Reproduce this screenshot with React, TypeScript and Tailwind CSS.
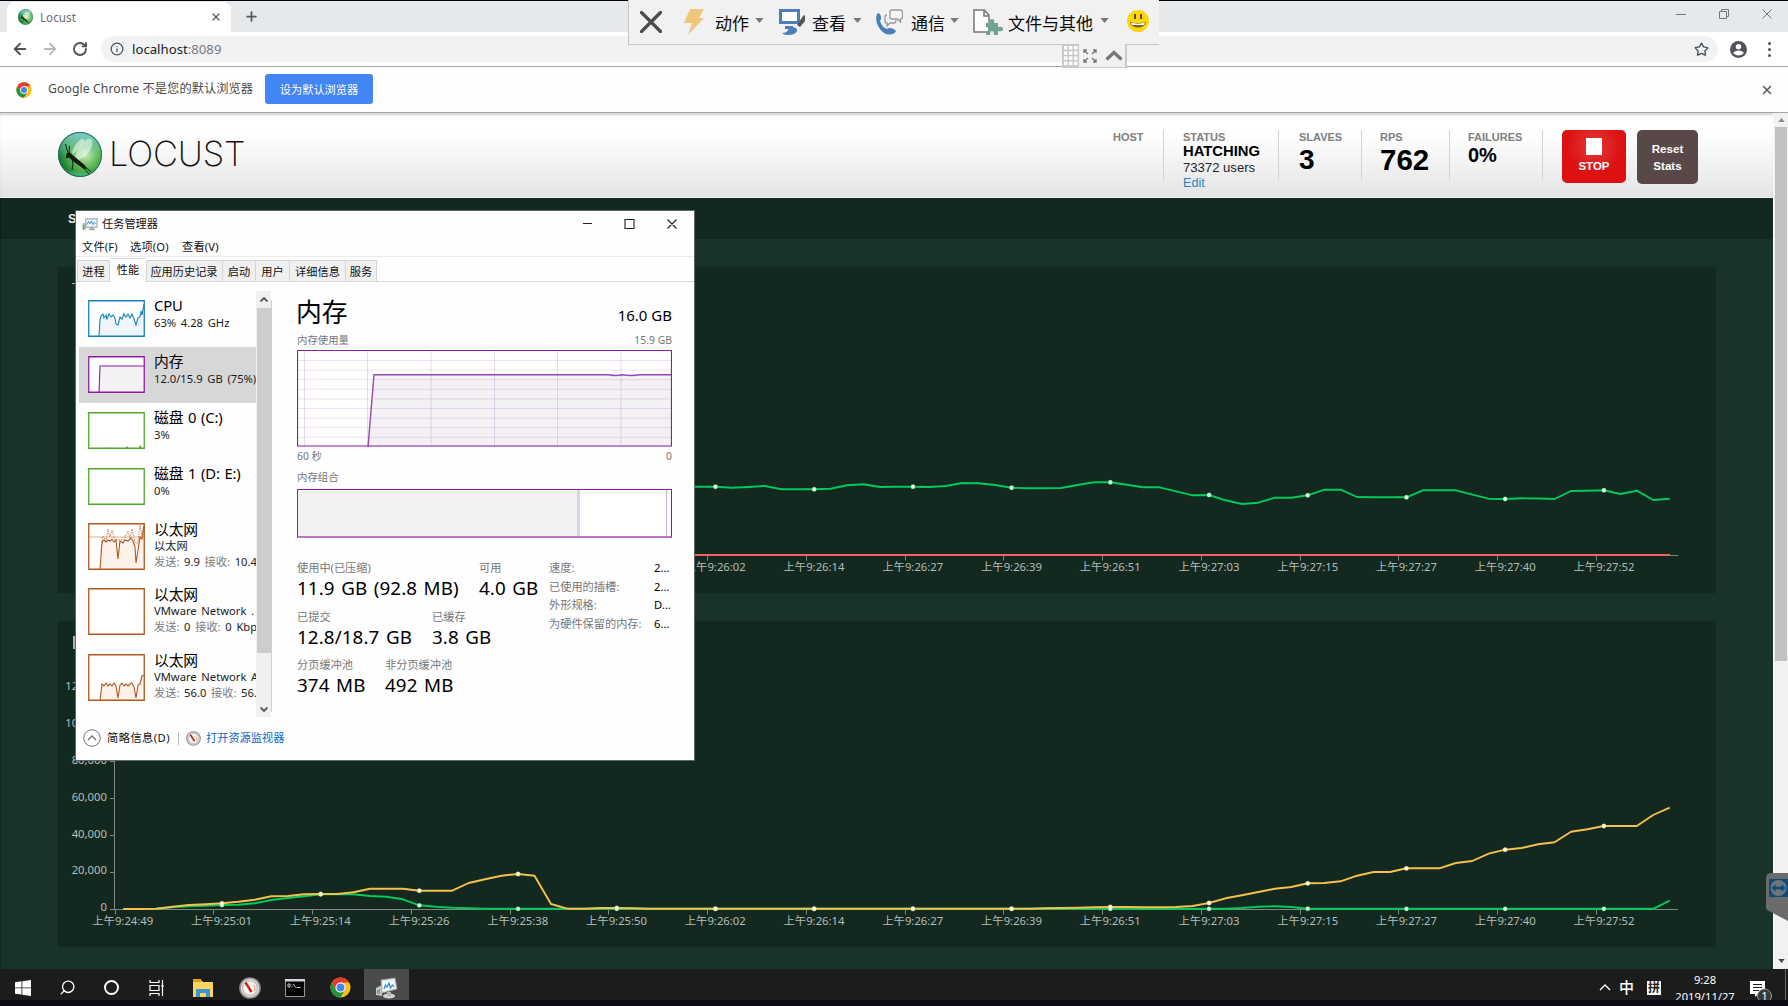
import React from "react";
import { Star, RotateCw, ArrowLeft, ArrowRight, Info, X, Plus, Search } from "lucide-react";

const UI = "font-['Noto_Sans','Noto_Sans_CJK_SC',sans-serif]";

/* ---------- chart data (pixel heights inside each panel) ---------- */
const X0 = 123.2;
const STEP = 16.452;
const px = (i: number) => X0 + i * STEP;

const rps = [
  486.7, 486.7, 486.7, 487.7, 487, 486, 489.3, 489.3, 489.3, 488.7, 485.3, 484.3, 487, 486.8, 486.7, 487, 486, 483, 483.3,
  485, 487.7, 488.3, 488.2, 488, 485, 482.3, 482.3, 484.7, 487.3, 487.3, 491.3, 495.3, 495, 500.3, 504, 502.7, 497.7,
  497.7, 495.3, 489.7, 489.7, 497, 497.2, 497.3, 497.3, 490.3, 490.3, 490.3, 494.7, 498.7, 499, 498.3, 498.5, 499, 491,
  490.7, 490.3, 494, 490.7, 500, 498.7,
];
const flat = (n: number, v: number) => Array.from({ length: n }, () => v);
const p95 = [
  507, 507, 506, 500, 495, 493, 490, 485, 479, 469, 468, 463, 462, 462, 457, 446, 446, 446, 452, 452, 452, 429, 418, 407,
  402, 407, 492, 506, 506, 504, 504, 505,
  ...flat(24, 506),
  505, 504, 503, 502, 501, 501, 502, 502, 501, 498, 489, 475, 466, 456, 446, 441, 430, 429, 424, 407, 396, 396, 385, 385,
  385, 369, 363, 341, 329, 324, 313, 307, 275, 268, 258, 258, 258, 225, 203,
].map((v) => 740 + v / 3);
const p50 = [
  507, 507, 506, 502, 499, 497, 495, 494, 490, 480, 474, 469, 463, 463, 463, 468, 470, 478, 496, 500, 503, 505,
  ...flat(46, 506.5),
  504, 500, 499, 501, 506,
  ...flat(21, 506.5),
  482,
].map((v) => 740 + v / 3);

const times = [
  "9:24:49", "9:25:01", "9:25:14", "9:25:26", "9:25:38", "9:25:50", "9:26:02", "9:26:14", "9:26:27", "9:26:39",
  "9:26:51", "9:27:03", "9:27:15", "9:27:27", "9:27:40", "9:27:52",
];

function Series({ ys, start = 0, color }: { ys: number[]; start?: number; color: string }) {
  const pts = ys.map((y, k) => `${px(k + start).toFixed(1)},${y.toFixed(1)}`).join(" ");
  return (
    <g>
      <polyline points={pts} fill="none" stroke={color} strokeWidth="1.9" strokeLinejoin="round" />
      {ys.map((y, k) => ((k + start) % 6 === 0 && k + start > 0 ? <circle key={k} cx={px(k + start)} cy={y} r="2.200" fill="#f4fff0" stroke={color} strokeWidth=".4" /> : null))}
    </g>
  );
}

function TimeAxis({ y, from = 0 }: { y: number; from?: number }) {
  return (
    <g>
      <path d={`M115 ${y}H1678`} stroke="#7c8a83" strokeWidth="1" />
      {times.map((t, i) =>
        i < from ? null : (
          <g key={t}>
            <path d={`M${Math.round(114.5 + i * 98.75) + 0.5} ${y}v5`} stroke="#7c8a83" />
            <text x={X0 + i * 98.75 - 0.4} y={y + 15.7} textAnchor="middle" fontSize="11.300" fill="#b3beb8">
              上午{t}
            </text>
          </g>
        )
      )}
    </g>
  );
}

/* ---------- small drawings ---------- */
function LocustBall({ className }: { className: string }) {
  return (
    <svg viewBox="0 0 44 45" className={className}>
      <defs>
        <radialGradient id="ball" cx=".62" cy=".5" r=".6">
          <stop offset="0" stopColor="#d4efc4" />
          <stop offset=".35" stopColor="#7cc66c" />
          <stop offset=".75" stopColor="#2d9a33" />
          <stop offset="1" stopColor="#12683a" />
        </radialGradient>
        <linearGradient id="sky" x1="0" y1="0" x2="0" y2="1">
          <stop offset="0" stopColor="#7fcfd0" />
          <stop offset=".55" stopColor="#7fcfb0" stopOpacity=".1" />
          <stop offset=".85" stopColor="#5fd0a0" stopOpacity="0" />
          <stop offset="1" stopColor="#4fc49a" stopOpacity=".8" />
        </linearGradient>
      </defs>
      <ellipse cx="22" cy="22.5" rx="22" ry="22.5" fill="url(#ball)" />
      <ellipse cx="22" cy="22.5" rx="21.500" ry="22" fill="url(#sky)" stroke="#1c6f58" />
      <path d="M14 21C16 12 23 5 26 7c1 4-5 10-11 15z" fill="#f2fbef" opacity=".55" />
      <path d="M17 24C21 12 31 3 34 8c2 8-6 18-14 20z" fill="#f2fbef" opacity=".55" />
      <path d="M8 23q1-3 4-2.500l3 3 11 9 3 4-3 .5-10-7-5-4.500-3 1z" fill="#161c14" />
      <path d="M10 21 7.500 12M11 21l.5-7M14 27l1 5-1 6M22 32l9 10M25 33l8 7" stroke="#161c14" strokeWidth="1" fill="none" />
    </svg>
  );
}

function ChromeLogo({ className }: { className: string }) {
  return (
    <svg viewBox="0 0 48 48" className={className}>
      <circle cx="24" cy="24" r="23" fill="#fbc116" />
      <path d="M24 24 4.100 12.500A23 23 0 0 1 43.900 12.500L24 12.500z" fill="#e33b2e" />
      <path d="M4.100 12.500 14 29.800 24 24V12.500z" fill="#e33b2e" />
      <path d="M4.100 12.500A23 23 0 0 0 24 47l10-17.300A11.500 11.500 0 0 1 14 29.700z" fill="#229342" />
      <circle cx="24" cy="24" r="11.500" fill="#fff" />
      <circle cx="24" cy="24" r="9" fill="#4285f4" />
    </svg>
  );
}

function Gauge({ className }: { className: string }) {
  return (
    <svg viewBox="0 0 22 22" className={className}>
      <circle cx="11" cy="11" r="10" fill="#e0deda" stroke="#8f8f8f" strokeWidth="1.600" />
      <circle cx="11" cy="11" r="7.400" fill="#f6f4f2" stroke="#c2bdb7" strokeWidth="1.400" />
      <path d="m6.500 5.500 6 9.500" stroke="#c3261f" strokeWidth="2.400" />
      <path d="M14.500 8q2.500 3 .5 6.500" fill="none" stroke="#eba77f" strokeWidth="1.200" />
    </svg>
  );
}

function TaskMgrIcon({ className }: { className: string }) {
  return (
    <svg viewBox="0 0 22 20" className={className}>
      <path d="M1 8h5v9H1z" fill="#b9bfc1" />
      <path d="M1 10h2v7H1z" fill="#59a64b" />
      <path d="M5 2h16v12H5z" fill="#c9d0d3" stroke="#84898c" strokeWidth=".8" />
      <path d="M6.500 3.500h13v9h-13z" fill="#eaf5fb" />
      <path d="m7 10 2-4 2 3 2-4 2 5 2-3 2 2" fill="none" stroke="#2b88c4" strokeWidth="1.200" />
      <path d="M11 14h5l2 4H9z" fill="#a7adb0" />
    </svg>
  );
}

function TaskMgrIconLarge() {
  return (
    <svg viewBox="0 0 22 22" className="h-[22px] w-[22px]">
      <path d="m0 11 6-3v11l-6-1z" fill="#c3c8ca" />
      <path d="m1 13 3-1v5l-3-.5z" fill="#8d9395" />
      <path d="m5 3 14-2 2 11-15 4z" fill="#dfe3e5" stroke="#9ba0a3" strokeWidth=".7" />
      <path d="m6.500 4.500 11.500-1.700 1.600 8.200-12.600 3z" fill="#f2f9fd" />
      <path d="m8 12 1.500-4 1.500 2 2-4 1.500 5 2-3 1.500 2" fill="none" stroke="#2b88c4" strokeWidth="1.200" />
      <ellipse cx="13" cy="19" rx="6" ry="2.500" fill="#d2d5d7" />
      <path d="M11 15h4v4h-4z" fill="#b4b9bb" />
    </svg>
  );
}

/* ---------- browser ---------- */
function Browser() {
  return (
    <div className={`flex h-[113px] flex-col ${UI}`}>
      <div className="flex h-8 border-t border-black bg-[#e5e9ec] pl-[7px]">
        <div className="mt-px flex w-56 items-center rounded-t-lg bg-white pl-[11px] pr-[9px]">
          <LocustBall className="h-4 w-[15px]" />
          <span className="ml-[7px] grow text-[11.700px] leading-4 text-[#6a6e73]">Locust</span>
          <X className="h-3 w-3 text-[#55595d]" strokeWidth={2.4} />
        </div>
        <div className="flex grow items-center pl-[13px]">
          <Plus className="h-[15px] w-[15px] text-[#55595d]" strokeWidth={2.8} />
        </div>
        <div className="mr-4 mt-2 flex items-start gap-[33px] text-[#74787c]">
          <svg viewBox="0 0 10 10" className="h-2.5 w-2.5" fill="none" stroke="currentColor"><path d="M0 5.500h10" /></svg>
          <svg viewBox="0 0 10 10" className="h-2.5 w-2.5" fill="none" stroke="currentColor"><path d="M.5 2.500h7v7h-7zM2.500 2.500v-2h7v7h-2" /></svg>
          <svg viewBox="0 0 10 10" className="h-2.5 w-2.5" fill="none" stroke="currentColor"><path d="m.5.5 9 9m0-9-9 9" /></svg>
        </div>
      </div>
      <div className="flex h-[34px] items-center bg-white pl-[11px]">
        <ArrowLeft className="h-[18px] w-[18px] text-[#4e5256]" strokeWidth={2.4} />
        <ArrowRight className="ml-3 h-[18px] w-[18px] text-[#b9bbbd]" strokeWidth={2.4} />
        <RotateCw className="ml-[13px] h-4 w-4 text-[#4e5256]" strokeWidth={2.8} />
        <div className="ml-[13px] flex h-[26px] w-[1617px] items-center rounded-full bg-[#f0f2f4] pl-[9px] pr-[9px]">
          <Info className="h-[14px] w-[14px] text-[#4e5256]" strokeWidth={2.2} />
          <span className="ml-2 grow text-[13.200px] leading-5 text-[#202226]">localhost<span className="text-[#777b80]">:8089</span></span>
          <Star className="h-[15px] w-[15px] text-[#4e5256]" strokeWidth={2.2} />
        </div>
        <svg viewBox="0 0 24 24" className="ml-3 h-[17px] w-[17px]">
          <circle cx="12" cy="12" r="12" fill="#505459" />
          <circle cx="12" cy="8" r="3.800" fill="#fff" />
          <path d="M4.500 17c2-5 13-5 15 0-3 4.500-12 4.500-15 0z" fill="#fff" />
        </svg>
        <div className="ml-[21px] flex flex-col gap-[3px]">
          <i className="h-[3px] w-[3px] rounded-full bg-[#505459]" />
          <i className="h-[3px] w-[3px] rounded-full bg-[#505459]" />
          <i className="h-[3px] w-[3px] rounded-full bg-[#505459]" />
        </div>
      </div>
      <div className="flex h-[47px] items-center border-b border-t border-[#a5a5a5] bg-[#fefefe] pl-4 pr-[14px]">
        <ChromeLogo className="h-4 w-4" />
        <span className="-mt-px ml-4 w-[217px] whitespace-nowrap text-[12.200px] leading-4 tracking-[.1px] text-[#4a4a4a]">Google Chrome 不是您的默认浏览器</span>
        <button className="-mt-px h-[30px] w-[108px] rounded-[3px] bg-[#4285f4] pt-px text-[11.200px] leading-4 text-white">设为默认浏览器</button>
        <div className="grow" />
        <X className="h-[14px] w-[14px] text-[#55595d]" strokeWidth={2.6} />
      </div>
    </div>
  );
}

function Stat({ label, className, children }: { label: string; className: string; children?: React.ReactNode }) {
  return (
    <div className={`flex h-[50px] flex-col whitespace-nowrap border-r border-[#d2d2d2] ${className}`}>
      <span className="h-3 pt-px text-[11px] font-bold leading-3 text-[#808080]">{label}</span>
      {children}
    </div>
  );
}

function LocustHeader() {
  return (
    <header className="flex h-[85px] shrink-0 border-b border-[#f4f4f4] bg-linear-to-b from-white from-25% to-[#e4e4e4] font-['Liberation_Sans',Arial,sans-serif] shadow-[inset_0_3px_3px_-1px_rgba(0,0,0,0.18)]">
      <LocustBall className="ml-[58px] mt-[19px] h-[45px] w-11" />
      <span className="ml-[7px] mt-[18px] w-[140px] whitespace-nowrap font-['Inter'] text-[34.500px] font-extralight leading-[46px] tracking-[-.2px] text-[#111]">LOCUST</span>
      <div className="ml-auto mr-[75px] mt-[17px] flex">
        <Stat label="HOST" className="w-[51px]" />
        <Stat label="STATUS" className="w-[115px] pl-[19px]">
          <span className="mt-px text-[14.800px] font-bold leading-[17px] text-black">HATCHING</span>
          <span className="text-[13.100px] leading-4 text-[#222]">73372 users</span>
          <span className="text-[12.600px] leading-[14px] text-[#2b85bb]">Edit</span>
        </Stat>
        <Stat label="SLAVES" className="w-[83px] pl-5"><b className="text-[28px] leading-[35px]">3</b></Stat>
        <Stat label="RPS" className="w-[88px] pl-[18px]"><b className="text-[29.500px] leading-[35px]">762</b></Stat>
        <Stat label="FAILURES" className="w-[93px] pl-[18px]"><b className="text-[20px] leading-[27px]">0%</b></Stat>
        <button className="ml-[19px] flex h-[53px] w-16 flex-col items-center rounded-[5px] bg-[radial-gradient(circle_at_50%_30%,#e23a3a,#dc1212_55%)] pt-2 text-[11.500px] font-bold leading-[13px] text-white">
          <i className="mb-[5px] h-[17px] w-4 bg-white" />
          STOP
        </button>
        <button className="ml-[11px] h-[54px] w-[61px] rounded-[5px] bg-[#594848] px-3 pb-px text-[11.600px] font-bold leading-[17px] text-white">Reset Stats</button>
      </div>
    </header>
  );
}

function LocustPage() {
  return (
    <div className="flex h-[856px]">
      <div className="flex w-[1773px] flex-col">
        <LocustHeader />
        <nav className="h-[41px] shrink-0 border-l border-[#0b1c15] bg-[#132920] pl-[67px] pt-[13px] font-['Liberation_Sans',Arial,sans-serif] text-[12.500px] font-bold leading-4 text-[#e6ebe8]">S</nav>
        <div className="flex h-[730px] flex-col gap-7 border-l border-[#0b2b1e] bg-[#193328] pl-[57px] pt-7">
          <section className="h-[326px] w-[1658px] rounded-[3px] bg-[#132920] shadow-[0_0_1px_#0e221a]">
            <svg width="1658" height="326" viewBox="58 267 1658 326" className={`block ${UI}`}>
              <path d="M72 283.500h4" stroke="#a8b4ae" />
              <TimeAxis y={555.5} from={6} />
              <Series ys={rps} start={34} color="#00ca5a" />
              <path d="M650 555H1670" stroke="#f2645f" strokeWidth="2" />
            </svg>
          </section>
          <section className="h-[326px] w-[1658px] rounded-[3px] bg-[#132920] shadow-[0_0_1px_#0e221a]">
            <svg width="1658" height="326" viewBox="58 621 1658 326" className={`block ${UI}`}>
              <path d="M74 636v13" stroke="#a8b4ae" strokeWidth="2" />
              <path d="M114.500 650V909" stroke="#7c8a83" />
              {["120,000", "100,000", "80,000", "60,000", "40,000", "20,000", "0"].map((t, i) => (
                <g key={t}>
                  <path d={`M110 ${687.5 + i * 37}h5`} stroke="#7c8a83" />
                  <text x="107" y={690.2 + i * 36.85} textAnchor="end" fontSize="11.300" fill="#b3beb8">{t}</text>
                </g>
              ))}
              <TimeAxis y={909.5} />
              <Series ys={p50} color="#00ca5a" />
              <Series ys={p95} color="#f5c14c" />
            </svg>
          </section>
        </div>
      </div>
      <div className="flex w-[15px] flex-col items-center justify-between border-l border-[#fafafa] bg-[#f1f1f1]">
        <div className="flex flex-col items-center">
          <svg viewBox="0 0 8 5" className="mb-[5px] mt-[5px] h-[4px] w-[7px]"><path d="M0 5 4 0l4 5z" fill="#8a8a8a" /></svg>
          <div className="h-[534px] w-3 bg-[#c1c1c1]" />
        </div>
        <svg viewBox="0 0 8 5" className="mb-[6px] h-[4px] w-[7px]"><path d="M0 0 4 5l4-5z" fill="#444" /></svg>
      </div>
    </div>
  );
}

/* ---------- remote control bar ---------- */
function Caret() {
  return <svg viewBox="0 0 10 6" className="h-[5px] w-[9px]"><path d="M0 0h10L5 6z" fill="#777" /></svg>;
}

function RemoteBar() {
  return (
    <div className={`absolute left-[628px] top-0 flex w-[531px] flex-col ${UI}`}>
      <div className="flex h-[45px] items-center border-b border-l border-[#c6c6c6] bg-[#f1f1f1] pl-[11px] text-[17px] leading-6 text-[#0c0c0c]">
        <svg viewBox="0 0 22 22" className="h-[22px] w-[22px]"><path d="m1.500 1.500 19 19m0-19-19 19" stroke="#4b4b4b" strokeWidth="3.200" strokeLinecap="round" /></svg>
        <svg viewBox="0 0 20 26" className="ml-[22px] h-[26px] w-5"><path d="M6 0h14l-5 9h5L4 26l4-12H0z" fill="#f0c67c" /></svg>
        <span className="ml-[11px] mt-[3px] w-[36px]">动作</span>
        <span className="ml-[4px] w-[24px] pb-[3px]"><Caret /></span>
        <svg viewBox="0 0 27 26" className="h-[26px] w-[27px]">
          <path d="M1.500 1.500h18v12h-18z" fill="#fff" stroke="#4a7fb8" strokeWidth="3" />
          <path d="M6 17h8v3H6z" fill="#4a7fb8" />
          <path d="M3 24q5 0 6-3c1-3 6-4 9-1 1 5-6 6-9 6-3 0-5-1-6-2z" fill="#4a7fb8" />
          <path d="m18 16 6-9 2-1v6l-5 6z" fill="#555" />
        </svg>
        <span className="ml-[6px] mt-[3px] w-[36px]">查看</span>
        <span className="ml-[5px] w-[22px] pb-[3px]"><Caret /></span>
        <svg viewBox="0 0 28 26" className="h-[26px] w-7">
          <path d="M3 4c3 0 4 6 2 8 1 4 4 7 7 8 2-2 7-1 9 2-2 4-6 4-10 3C4 22-2 10 3 4z" fill="#4a7fb8" />
          <path d="M12 6q-2 0-2 2v4q0 2 2 2v3l3-3h4q2 0 2-3" fill="none" stroke="#999" strokeWidth="1.300" />
          <path d="M17 1h8.500q2 0 2 2v5q0 2-2 2v3l-3-3H17q-2 0-2-2V3q0-2 2-2z" fill="#f6f6f6" stroke="#999" strokeWidth="1.300" />
        </svg>
        <span className="ml-[8px] mt-[3px] w-[36px]">通信</span>
        <span className="ml-[3px] w-[23px] pb-[3px]"><Caret /></span>
        <svg viewBox="0 0 30 26" className="h-[26px] w-[30px]">
          <path d="M1 1h10l5 5v17H1zM11 1v6h5" fill="#fff" stroke="#777" strokeWidth="1.500" />
          <path d="M13 14h4q-1-4 2-4t2 4h4v4q5-1 5 2t-5 2v4h-4q0-4-2-4t-2 4h-4v-4q3 0 3-2t-3-2z" fill="#6fa394" />
        </svg>
        <span className="ml-[5px] mt-[3px] w-[86px] whitespace-nowrap">文件与其他</span>
        <span className="ml-[6px] w-[27px] pb-[3px]"><Caret /></span>
        <svg viewBox="0 0 22 22" className="-mt-[2px] h-[22px] w-[22px]">
          <circle cx="11" cy="11" r="11" fill="#fbd60a" />
          <path d="M3 11.500c1.500 2 14.500 2 16 0-1 8-15 8-16 0z" fill="#86602c" />
          <path d="M4 12.500c4 1.500 10 1.500 14 0l-1 2.500H5z" fill="#fff" />
          <path d="M8 4v5M14 4v5" stroke="#61481e" strokeWidth="2" />
        </svg>
      </div>
      <div className="ml-[434px] -mt-px flex h-[24px] w-[65px] items-center border-b border-r-2 border-[#c9c9c9] bg-[#f1f1f1]">
        <svg viewBox="0 0 17 23" className="h-[23px] w-[17px]">
          <path d="M0 0h17v23H0z" fill="#c9c9c9" />
          {[0, 1, 2, 3].map((r) => [0, 1, 2].map((c) => <path key={`${r}${c}`} d={`M${2 + c * 5} ${2 + r * 5.2}h3.500v3.500h-3.500z`} fill="#fff" />))}
        </svg>
        <svg viewBox="0 0 14 14" className="ml-1 h-[14px] w-[14px]" fill="none" stroke="#777" strokeWidth="1.400">
          <path d="M1 4V1h3M10 1h3v3M13 10v3h-3M4 13H1v-3M1 1l4 4M13 1 9 5M13 13 9 9M1 13l4-4" />
        </svg>
        <svg viewBox="0 0 18 11" className="ml-[8px] h-[11px] w-[18px]" fill="none" stroke="#777" strokeWidth="3.400"><path d="m1.500 9.500 7.500-7 7.500 7" /></svg>
      </div>
    </div>
  );
}

/* ---------- task manager ---------- */
const cpuLine = "M11 36 12 20 13 16 15 14 16 18 18 15 19 19 21 14 23 17 25 15 27 18 28 24 30 25 32 17 34 19 36 14 38 17 40 14 42 18 44 14 46 19 48 25 50 18 52 17 53 11 54 15 56 4";
const memLine = "M11 37 12 10 57 10";
const netLine = "M12 47 14 19 16 17 18 19 20 17 22 18 24 16 26 19 28 17 30 36 32 18 35 20 37 17 40 18 43 15 45 18 47 24 48 40 50 27 52 14 54 16 56 3";
const net2Line = "M12 47 14 30 16 32 18 29 20 32 22 30 24 32 26 29 28 32 30 44 32 31 34 29 36 32 38 30 40 32 42 30 44 29 46 33 48 44 50 31 52 30 54 22 57 21";

type Item = { name: string; lines: React.ReactNode[]; color: string; fill?: string; line?: string; dotted?: string; active?: boolean };
const gray = (t: string) => <span className="text-[#7b7b7b]">{t}</span>;
const items: Item[] = [
  { name: "CPU", lines: ["63% 4.28 GHz"], color: "#1583bd", fill: "#eff6fb", line: cpuLine },
  { name: "内存", lines: ["12.0/15.9 GB (75%)"], color: "#8e1ba6", fill: "#f3f1f4", line: memLine, active: true },
  { name: "磁盘 0 (C:)", lines: ["3%"], color: "#4ea82a", fill: "#effbe9", line: "M21 37 22 36 23 37 38 37 39 35 40 37 51 37 52 34 54 37" },
  { name: "磁盘 1 (D: E:)", lines: ["0%"], color: "#4ea82a" },
  { name: "以太网", lines: ["以太网", <>{gray("发送:")} 9.9 {gray("接收:")} 10.4</>], color: "#b0581e", fill: "#fdf2ea", line: netLine, dotted: "M13 28 15 13 18 18 20 6 22 14 24 7 27 17 36 17 40 8 42 15 44 6 47 20 50 20 52 2 54 13 56 1" },
  { name: "以太网", lines: ["VMware Network .", <>{gray("发送:")} 0 {gray("接收:")} 0 Kbp</>], color: "#b0581e" },
  { name: "以太网", lines: ["VMware Network A", <>{gray("发送:")} 56.0 {gray("接收:")} 56.</>], color: "#b0581e", fill: "#fdf2ea", line: net2Line },
];

function ListItem({ it }: { it: Item }) {
  const tall = it.lines.length > 1;
  const h = tall ? 47 : 37;
  return (
    <div className={`flex shrink-0 pl-[9px] ${tall ? "h-[65.300px] pt-[8px]" : "h-14 pt-[9px]"} ${it.active ? "bg-[#d7d7d7]" : ""}`}>
      <svg width="57" height={h} viewBox={`0 0 57 ${h}`} className="shrink-0">
        <path d={`M0 0h57v${h}H0z`} fill="#fff" />
        {it.line && <path d={`${it.line}V${h}H11z`} fill={it.fill} />}
        {it.dotted && <path d="M0 14H57" stroke={it.color} strokeWidth=".5" />}
        {it.dotted && <path d={it.dotted} fill="none" stroke="#dc7c4d" strokeWidth="1" strokeDasharray="1.500 1" />}
        {it.line && <path d={it.line} fill="none" stroke={it.color} strokeWidth="1.100" />}
        <path d={`M.75.75h55.500v${h - 1.5}H.75z`} fill="none" stroke={it.color} strokeWidth="1.300" />
      </svg>
      <div className="ml-[9px] flex flex-col whitespace-nowrap text-[11.200px] text-[#1a1a1a]">
        <span className={`text-[14.800px] tracking-[-.15px] text-black [word-spacing:1px] ${tall ? "h-[15px] leading-[13px]" : "h-[15px] leading-[11px]"}`}>{it.name}</span>
        {it.lines.map((l, i) => (
          <span key={i} className="h-4 leading-[16px] [word-spacing:1.800px]">{l}</span>
        ))}
      </div>
    </div>
  );
}

function Fact({ label, value, className = "" }: { label: string; value: string; className?: string }) {
  return (
    <div className={`flex flex-col whitespace-nowrap ${className}`}>
      <span className="h-[17px] text-[11.200px] leading-[17px] text-[#767676]">{label}</span>
      <span className="h-6 text-[18.800px] leading-[25px] tracking-[.1px] text-black [word-spacing:1.500px]">{value}</span>
    </div>
  );
}

function TaskManager() {
  const tab = "h-[21px] border-r border-t border-[#d5d5d5] bg-[#f0f0f0] text-center leading-[21px]";
  return (
    <div className={`absolute left-[75px] top-[210px] flex h-[551px] w-[620px] flex-col border border-[#5a6a63] bg-[#fefefe] text-[11.200px] text-[#111] ${UI}`}>
      <div className="flex h-[27px] items-center pb-px pl-[6px] pr-[16px]">
        <TaskMgrIcon className="mt-px h-[15px] w-4" />
        <span className="ml-1 grow leading-4">任务管理器</span>
        <svg viewBox="0 0 96 12" className="h-3 w-24" fill="none" stroke="#222" strokeWidth="1.100"><path d="M1 5.500h9M43 1.500h9v9h-9zM85.500 1.500l9 9m0-9-9 9" /></svg>
      </div>
      <div className="flex h-[19px] border-b border-[#ececec] pl-[6px] leading-[18px] tracking-[.2px]">
        <span className="w-12">文件(F)</span>
        <span className="w-[52px]">选项(O)</span>
        <span>查看(V)</span>
      </div>
      <div className="flex h-[25px] items-end border-b border-[#d9d9d9] pl-px">
        <div className={`${tab} w-[33px] border-l`}>进程</div>
        <div className="-mb-px h-[24px] w-[36px] border-t border-[#d5d5d5] bg-[#fefefe] text-center leading-[21px]">性能</div>
        <div className={`${tab} w-[77px] border-l pr-px`}>应用历史记录</div>
        <div className={`${tab} w-[33px]`}>启动</div>
        <div className={`${tab} w-[34px]`}>用户</div>
        <div className={`${tab} w-[56px]`}>详细信息</div>
        <div className={`${tab} w-[31px]`}>服务</div>
      </div>
      <div className="flex h-[435px] pt-[9px]">
        <div className="ml-[3px] flex h-[426px] w-[177px] flex-col overflow-hidden">
          {items.map((it, i) => <ListItem key={i} it={it} />)}
        </div>
        <div className="flex h-[426px] w-[15px] flex-col items-center bg-[#f0f0f0]">
          <svg viewBox="0 0 8 5" className="my-[6px] h-[5px] w-2 shrink-0" fill="none" stroke="#555" strokeWidth="1.800"><path d="m.5 4.500 3.500-3.500 3.500 3.500" /></svg>
          <div className="h-[345px] w-[14px] bg-[#cdcdcd]" />
          <svg viewBox="0 0 8 5" className="mb-[5px] mt-auto h-[5px] w-2" fill="none" stroke="#555" strokeWidth="1.800"><path d="m.5.5 3.500 3.500 3.500-3.500" /></svg>
        </div>
        <div className="mt-[9px] h-[412px] w-px bg-[#d0d0d0]" />
        <div className="ml-[25px] flex w-[375px] flex-col pt-px text-[10.400px] text-[#767676]">
          <div className="flex h-[39px] items-end justify-between text-black">
            <span className="-ml-px text-[25.800px] leading-[38px]">内存</span>
            <span className="mb-[3px] text-[15px] leading-[26px]">16.0 GB</span>
          </div>
          <div className="flex h-[18px] justify-between leading-[18px]"><span>内存使用量</span><span>15.9 GB</span></div>
          <svg width="375" height="98" viewBox="297 350 375 98" className="mt-px shrink-0">
            <path d="M297 350h375v97H297z" fill="#fff" />
            <path d="M368 447 374 375H672V447z" fill="#f3f1f4" />
            {[304.5, 367.5, 431, 494.5, 557.5, 621].map((x) => <path key={x} d={`M${x} 350v97`} stroke="#9a4cb0" strokeOpacity=".2" />)}
            {[0, 1, 2, 3, 4, 5, 6, 7, 8].map((i) => <path key={i} d={`M297 ${360.5 + i * 9.6}h375`} stroke="#9a4cb0" strokeOpacity=".18" />)}
            <path d="M368 447 374 374.700H608q8 1.500 14 0 9 1.500 18 0H672" fill="none" stroke="#9a45b2" strokeWidth="1.400" />
            <path d="M297.500 350.500h374v95.500h-374z" fill="none" stroke="#8e1ba6" strokeWidth="1.200" />
          </svg>
          <div className="flex h-[18px] justify-between leading-[17px]"><span>60 秒</span><span>0</span></div>
          <div className="mt-[3px] h-[20px] leading-[17px]">内存组合</div>
          <div className="flex h-[49px] shrink-0 border border-b-2 border-[#8e1ba6] border-b-[#b877c6] bg-white">
            <div className="w-[282px] border-r-[3px] border-[#dfcfe3] bg-[#f3f1f4]" />
            <div className="w-[87px] border-r border-[#cfaed7]" />
          </div>
          <div className="mt-[21px] flex">
            <div className="flex w-[252px] flex-col gap-[7.500px]">
              <div className="flex"><Fact className="w-[182px]" label="使用中(已压缩)" value="11.9 GB (92.8 MB)" /><Fact label="可用" value="4.0 GB" /></div>
              <div className="flex"><Fact className="w-[135px]" label="已提交" value="12.8/18.7 GB" /><Fact label="已缓存" value="3.8 GB" /></div>
              <div className="flex"><Fact className="w-[88px]" label="分页缓冲池" value="374 MB" /><Fact label="非分页缓冲池" value="492 MB" /></div>
            </div>
            <div className="grid w-[123px] auto-rows-[18.600px] grid-cols-[105px_18px] whitespace-nowrap text-[11.200px] leading-[17px]">
              <span>速度:</span><span className="text-black">2...</span>
              <span>已使用的插槽:</span><span className="text-black">2...</span>
              <span>外形规格:</span><span className="text-black">D...</span>
              <span>为硬件保留的内存:</span><span className="text-black">6...</span>
            </div>
          </div>
        </div>
      </div>
      <div className="flex h-[42px] items-center pl-[7px] leading-4">
        <svg viewBox="0 0 18 18" className="h-[18px] w-[18px]" fill="none" stroke="#777"><circle cx="9" cy="9" r="8.300" /><path d="m5 11 4-4 4 4" strokeWidth="1.300" /></svg>
        <span className="ml-[6px] w-[71px] tracking-[.5px]">简略信息(D)</span>
        <div className="h-[13px] w-px bg-[#bbb]" />
        <Gauge className="ml-[7px] h-[15px] w-[15px]" />
        <span className="ml-[5px] text-[#0b66c9]">打开资源监视器</span>
      </div>
    </div>
  );
}

/* ---------- windows task bar ---------- */
function Taskbar() {
  return (
    <div className={`flex h-[37px] flex-col bg-[#0a0b13] text-white ${UI}`}>
      <div className="flex h-[31px] bg-[#1c1c1c]">
        <div className="flex w-[45px] items-center justify-center pt-[6px]">
          <svg viewBox="0 0 16 16" className="h-4 w-4" fill="#fff"><path d="M0 2.300 6.500 1.300V7.500H0zM7.300 1.200 16 0v7.500H7.300zM0 8.300h6.500v6.300L0 13.700zM7.300 8.300H16V16l-8.700-1.200z" /></svg>
        </div>
        <div className="flex w-[44px] items-center justify-center pt-[6px]"><Search className="h-[17px] w-[17px] -scale-x-100" strokeWidth={1.9} /></div>
        <div className="flex w-[45px] items-center justify-center pt-[6px]"><i className="h-[15px] w-[15px] rounded-full border-2 border-white" /></div>
        <div className="flex w-[45px] items-center justify-center pt-[6px]">
          <svg viewBox="0 0 16 16" className="h-4 w-4" fill="none" stroke="#fff" strokeWidth="1.200"><path d="M1 0v2.500h9V0M1 5.500h9v5H1zM1 16v-2.500h9V16M13.500 0v16M12 6h3" /></svg>
        </div>
        <div className="flex w-[48px] items-center justify-center pt-[6px]">
          <svg viewBox="0 0 20 18" className="h-[18px] w-5"><path d="M0 1h8l2 2h10v15H0z" fill="#fcd462" /><path d="M0 0h8v3H0z" fill="#e8a200" /><path d="M3 18V10h14v8h-4v-4H7v4z" fill="#3a94d6" /></svg>
        </div>
        <div className="flex w-[45px] items-center justify-center pt-[6px]"><Gauge className="h-[22px] w-[22px]" /></div>
        <div className="flex w-[45px] items-center justify-center pt-[6px]">
          <svg viewBox="0 0 20 18" className="h-[18px] w-5"><path d="M.5.5h19v17H.5z" fill="#050505" stroke="#999" /><path d="M0 0h20v2.500H0z" fill="#d6d2de" /><path d="M3 5h2v3H3zM7 5.500v.8M7 7.500v.8M8.500 5l2 3.500M11.500 8.500h4" fill="none" stroke="#ccc" /></svg>
        </div>
        <div className="flex w-[47px] items-center justify-center pt-[6px]"><ChromeLogo className="h-[21px] w-[21px]" /></div>
        <div className="flex w-[45px] items-center justify-center bg-[#4b4b4b] pt-[6px]"><TaskMgrIconLarge /></div>
        <div className="ml-auto flex">
          <svg viewBox="0 0 12 7" className="mt-[15px] h-[7px] w-3" fill="none" stroke="#fff" strokeWidth="1.400"><path d="m1 6 5-5 5 5" /></svg>
          <span className="ml-2 mt-[8px] w-[16px] text-[15px] font-medium leading-[20px]">中</span>
          <span className="ml-[12px] mt-[12px] h-[14px] w-[14px] bg-white text-center text-[12px] font-bold leading-[13px] text-[#1c1c1c]">拼</span>
          <div className="ml-[13px] flex h-[31px] w-[62px] flex-col items-center whitespace-nowrap pt-[2px] text-[11.200px] leading-[17px]"><span>9:28</span><span>2019/11/27</span></div>
          <svg viewBox="0 0 24 20" className="ml-[13px] mt-[11px] h-[20px] w-6">
            <path d="M1 1h15v13H9l-3 3v-3H1z" fill="#fff" /><path d="M4 4.500h9M4 7.500h9M4 10.500h6" stroke="#1c1c1c" />
            <circle cx="15.500" cy="16" r="7" fill="#3a3a3a" stroke="#999" />
            <text x="15.500" y="19.500" textAnchor="middle" fontSize="11.500" fill="#fff">1</text>
          </svg>
          <div className="ml-[12px] mr-[2px] h-full w-px bg-[#666]" />
        </div>
      </div>
      <div className="relative h-[6px] bg-[#0a0b13]" />
    </div>
  );
}

function SideHandle() {
  return (
    <svg viewBox="0 0 22 48" className="absolute left-[1766px] top-[873px] h-12 w-[22px]">
      <path d="M5 0h17v48L3 38q-3-1-3-4V6q0-6 5-6z" fill="#6b6b6b" />
      <path d="M3 6h19v18H3z" fill="#0d4b7e" />
      <circle cx="12.500" cy="15" r="8" fill="#6f7478" />
      <path d="m5.500 15 4-4v2.800h6V11l4 4-4 4v-2.800h-6V19z" fill="#0d4b7e" />
    </svg>
  );
}

export default function App() {
  return (
    <div className="relative flex h-[1006px] w-[1788px] flex-col overflow-hidden bg-white">
      <Browser />
      <LocustPage />
      <Taskbar />
      <RemoteBar />
      <TaskManager />
      <SideHandle />
    </div>
  );
}
